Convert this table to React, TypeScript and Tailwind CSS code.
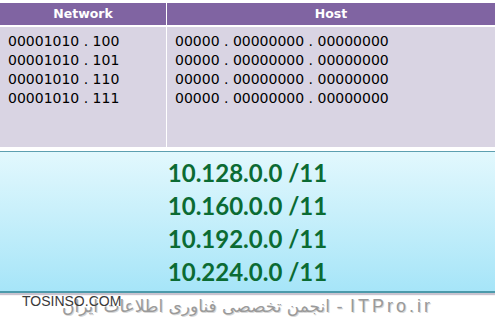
const networks = ["100", "101", "110", "111"]
const subnets = ["10.128.0.0", "10.160.0.0", "10.192.0.0", "10.224.0.0"]

export default function App() {
  return (
    <div className="w-[495px] h-[322px] overflow-hidden bg-white pt-[3px] font-['DejaVu_Sans',sans-serif]">
      {/* subnet table */}
      <div className="grid grid-cols-[166px_1fr] grid-rows-[22px_120px] gap-x-px gap-y-[2px] bg-white">
        <div className="flex items-center justify-center bg-[#8064a2] text-[12.5px] font-bold text-white">
          Network
        </div>
        <div className="flex items-center justify-center bg-[#8064a2] text-[12.5px] font-bold text-white">
          Host
        </div>
        <div className="bg-[#d9d4e3] pl-[8px] pt-[5px] text-[14px] leading-[19px] text-black">
          {networks.map((n) => (
            <div key={n}>00001010 . {n}</div>
          ))}
        </div>
        <div className="bg-[#d9d4e3] pl-[8px] pt-[5px] text-[14px] leading-[19px] text-black">
          {networks.map((n) => (
            <div key={n}>00000 . 00000000 . 00000000</div>
          ))}
        </div>
      </div>

      {/* result */}
      <div className="mt-[4px] border-t border-b-2 border-t-[#5d9fb0] border-b-[#4c9aab] bg-gradient-to-b from-[#e2f8fd] to-[#a6e5f8] pt-[4px] pb-[3px] text-center font-['Lato',sans-serif] text-[24px] font-bold leading-[33px] text-[#0b6b33] shadow-[0_2px_1px_#c9c3cf]">
        {subnets.map((s) => (
          <div key={s}>
            {s} /11
          </div>
        ))}
      </div>

      {/* footer watermark */}
      <div className="relative h-[29px]">
        <div
          dir="rtl"
          className="absolute right-[62px] top-[0px] whitespace-nowrap font-['DejaVu_Sans',sans-serif] text-[17px] tracking-[1px] text-[#9a9a9a] [text-shadow:1px_1px_0_#d8d8d8]"
        >
          <span className="font-['Liberation_Sans',sans-serif] text-[18px] tracking-[3px]">ITPro.ir</span> - انجمن تخصصی فناوری اطلاعات ایران
        </div>
        <div className="relative pl-[22px] font-['Liberation_Sans',sans-serif] text-[14px] leading-[16px] text-[#3a3a3a]">
          TOSINSO.COM
        </div>
      </div>
    </div>
  )
}
